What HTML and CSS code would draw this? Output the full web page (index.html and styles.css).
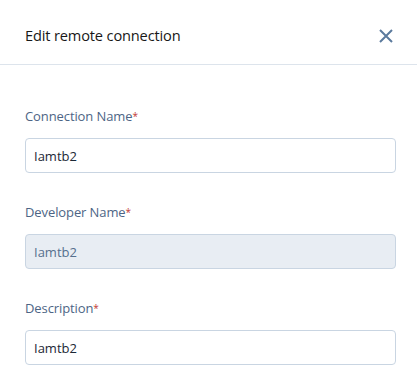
FILE: index.html
```html
<!DOCTYPE html>
<html>
<head>
<meta charset="utf-8">
<link rel="stylesheet" href="styles.css">
</head>
<body>
<div class="modal">
  <div class="header">
    <h2 class="title">Edit remote connection</h2>
    <button class="close" aria-label="Close">
      <svg width="14" height="14" viewBox="0 0 14 14"><path d="M1 1L13 13M13 1L1 13" stroke="#5b7a9d" stroke-width="2" fill="none"/></svg>
    </button>
  </div>
  <div class="body">
    <div class="field">
      <label class="label">Connection Name<span class="req">*</span></label>
      <div class="input">Iamtb2</div>
    </div>
    <div class="field">
      <label class="label">Developer Name<span class="req">*</span></label>
      <div class="input disabled">Iamtb2</div>
    </div>
    <div class="field">
      <label class="label">Description<span class="req">*</span></label>
      <div class="input">Iamtb2</div>
    </div>
  </div>
</div>
</body>
</html>
```
FILE: styles.css
```css
* { box-sizing: border-box; }
html, body { margin: 0; padding: 0; background: #fff; }
body { font-family: "Open Sans", "Noto Sans", sans-serif; width: 417px; height: 378px; overflow: hidden; }
.modal { width: 417px; }
.header {
  height: 65px;
  border-bottom: 1px solid #dde4ec;
  display: flex;
  align-items: center;
  justify-content: space-between;
  padding: 0 24px 0 25px;
}
.title { margin: 0; font-size: 14.6px; font-weight: 400; color: #181818; letter-spacing: -0.15px; padding-top: 5px; }
.close { border: 0; background: none; padding: 0; width: 14px; height: 14px; display: flex; margin-top: 7px; }
.body { padding: 43px 21px 0 25px; display: flex; flex-direction: column; gap: 31px; }
.field { display: flex; flex-direction: column; }
.label { font-size: 13px; color: #4d6585; line-height: 16px; margin-bottom: 14px; letter-spacing: -0.1px; }
.req { color: #c23934; font-size: 10px; vertical-align: top; margin-left: 0; }
.input {
  height: 35px;
  border: 1px solid #c9d5e2;
  border-radius: 4px;
  padding: 0 8px;
  font-size: 13px;
  color: #1c2836;
  display: flex;
  align-items: center;
}
.input.disabled { background: #e8edf3; color: #56708e; }
```
